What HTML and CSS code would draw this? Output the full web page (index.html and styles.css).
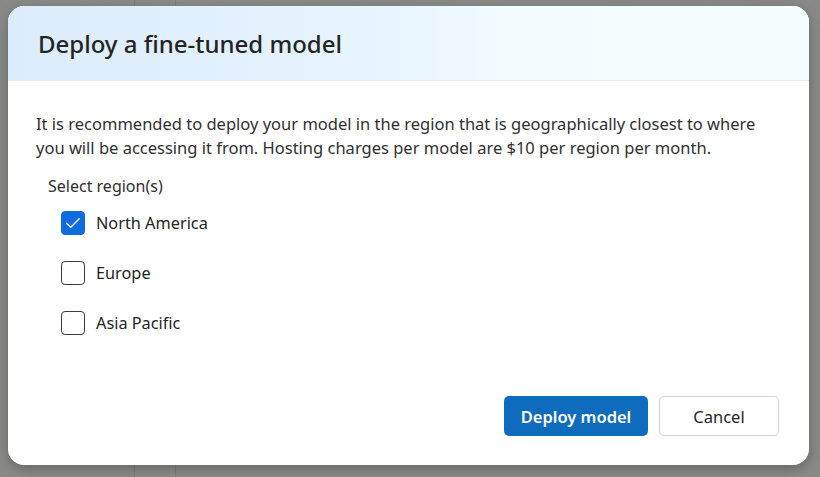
FILE: index.html
```html
<!DOCTYPE html>
<html>
<head>
<meta charset="utf-8">
<link rel="stylesheet" href="styles.css">
</head>
<body>
<div class="backdrop">
  <div class="line l1"></div>
  <div class="line l2"></div>
</div>
<div class="overlay">
  <div class="dialog">
    <div class="header">
      <h1 class="title">Deploy a fine-tuned model</h1>
    </div>
    <div class="body">
      <p class="desc">It is recommended to deploy your model in the region that is geographically closest to where you will be accessing it from. Hosting charges per model are $10 per region per month.</p>
      <div class="label">Select region(s)</div>
      <div class="options">
        <label class="opt"><span class="box checked"><svg width="20" height="20" viewBox="0 0 16 16"><path d="M2.8 8.2 L6.2 11.4 L13 4.6" fill="none" stroke="#fff" stroke-width="1.15" stroke-linecap="round" stroke-linejoin="round"/></svg></span><span class="opt-text">North America</span></label>
        <label class="opt"><span class="box"></span><span class="opt-text">Europe</span></label>
        <label class="opt"><span class="box"></span><span class="opt-text">Asia Pacific</span></label>
      </div>
    </div>
    <div class="footer">
      <button class="btn primary">Deploy model</button>
      <button class="btn secondary">Cancel</button>
    </div>
  </div>
</div>
</body>
</html>
```
FILE: styles.css
```css
html, body {
  margin: 0;
  padding: 0;
  width: 820px;
  height: 477px;
  overflow: hidden;
  background: #898a87;
  font-family: "Noto Sans", "Open Sans", sans-serif;
}
.backdrop {
  position: absolute;
  inset: 0;
}
.line {
  position: absolute;
  top: 0;
  bottom: 0;
  width: 1px;
  background: #7d7e7b;
}
.l1 { left: 134px; }
.l2 { left: 175px; }
.overlay {
  position: absolute;
  inset: 0;
  padding: 6px 11px 12px 8px;
  box-sizing: border-box;
  display: flex;
}
.dialog {
  flex: 1;
  background: #fff;
  border-radius: 16px;
  overflow: hidden;
  display: flex;
  flex-direction: column;
  box-shadow: 0 4px 12px rgba(0,0,0,0.25);
}
.header {
  height: 75px;
  box-sizing: border-box;
  border-bottom: 1px solid #e8ecef;
  background: linear-gradient(90deg, #dcecfc 0%, #e6f4fe 45%, #f2fcff 62%, #f4feff 100%);
  display: flex;
  align-items: center;
  padding-left: 30px;
}
.title {
  margin: 0;
  font-size: 24px;
  font-weight: 500;
  color: #242424;
  letter-spacing: 0;
}
.body {
  flex: 1;
  padding: 31px 28px 0 28px;
}
.desc {
  margin: 0;
  font-size: 16.5px;
  line-height: 24px;
  color: #303030;
}
.label {
  margin-top: 15px;
  margin-left: 12px;
  font-size: 16px;
  color: #303030;
}
.options {
  margin-top: 14px;
  margin-left: 25px;
  display: flex;
  flex-direction: column;
  gap: 26px;
}
.opt {
  display: flex;
  align-items: center;
  gap: 11px;
  height: 24px;
}
.box {
  width: 24px;
  height: 24px;
  box-sizing: border-box;
  border: 1.5px solid #3c3c3c;
  border-radius: 4px;
  display: flex;
  align-items: center;
  justify-content: center;
}
.box.checked {
  background: #0f6cdf;
  border-color: #0f6cdf;
}
.opt-text {
  font-size: 16.3px;
  color: #242424;
}
.footer {
  display: flex;
  justify-content: flex-end;
  gap: 11px;
  padding: 0 30px 29px 0;
}
.btn {
  height: 40px;
  border-radius: 5px;
  font-family: inherit;
  font-size: 16.5px;
  padding: 0;
}
.primary {
  width: 144px;
  background: #0f6cbd;
  border: none;
  color: #fff;
  font-weight: 600;
}
.secondary {
  width: 120px;
  background: #fff;
  border: 1px solid #d1d1d1;
  color: #242424;
}
```
